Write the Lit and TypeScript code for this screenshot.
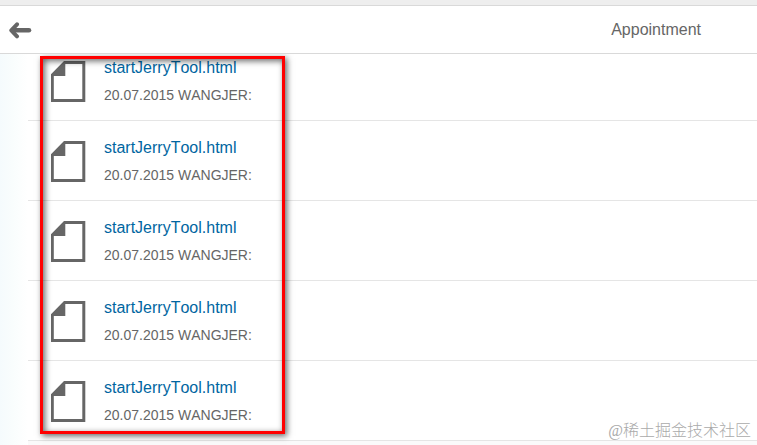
import { LitElement, html, css } from "lit";
import { customElement, property, state } from "lit/decorators.js";

interface Attachment {
  name: string;
  date: string;
  author: string;
}

@customElement("attachment-row")
class AttachmentRow extends LitElement {
  @property({ attribute: false }) item!: Attachment;

  static styles = css`
    :host {
      display: flex;
      box-sizing: border-box;
      height: 80px;
      padding: 17px 0 0 23px;
      gap: 18px;
      border-bottom: 1px solid #e5e5e5;
    }
    .icon {
      flex: none;
      width: 35px;
      height: 42px;
      margin-top: 3px;
      fill: #666;
    }
    .text {
      display: flex;
      flex-direction: column;
      align-items: flex-start;
      gap: 7px;
    }
    .name {
      font-size: 16px;
      line-height: 20px;
      color: #0066a1;
      text-decoration: none;
    }
    .meta {
      font-size: 14px;
      line-height: 20px;
      color: #666;
    }
  `;

  render() {
    return html`
      <svg class="icon" viewBox="0 0 35 42" aria-hidden="true">
        <path
          fill-rule="evenodd"
          d="M13 0H34.300V41H0V13.300ZM14.300 3V15H2.800V38H31.300V3Z"
        ></path>
      </svg>
      <div class="text">
        <a class="name" href="#">${this.item.name}</a>
        <span class="meta">${this.item.date} ${this.item.author}:</span>
      </div>
    `;
  }
}

@customElement("app-root")
class AppRoot extends LitElement {
  @state() private items: Attachment[] = Array.from({ length: 5 }, () => ({
    name: "startJerryTool.html",
    date: "20.07.2015",
    author: "WANGJER",
  }));

  static styles = css`
    :host {
      display: flex;
      flex-direction: column;
      position: relative;
      min-height: 100vh;
      font-family: "Liberation Sans", Arial, sans-serif;
      font-kerning: none;
      background: #fff;
    }
    .strip {
      height: 5px;
      background: #eee;
      border-bottom: 1px solid #d9d9d9;
    }
    header {
      display: flex;
      align-items: center;
      justify-content: space-between;
      height: 47px;
      padding: 0 56px 0 8px;
      border-bottom: 1px solid #d9d9d9;
    }
    .back {
      display: flex;
      padding: 0;
      border: 0;
      background: none;
      cursor: pointer;
    }
    .back svg {
      width: 24px;
      height: 19px;
      fill: none;
      stroke: #666;
      stroke-linecap: round;
      stroke-linejoin: round;
    }
    h1 {
      margin: 0;
      font-size: 16px;
      line-height: 20px;
      font-weight: 400;
      color: #666;
    }
    main {
      flex: 1;
      position: relative;
      overflow: hidden;
      padding-left: 28px;
      background: linear-gradient(to right, #f5fbfd 0, #f9fdfd 12px, #fff 28px);
    }
    /* The list is scrolled a little way under the header. */
    ul {
      margin: -13px 0 0;
      padding: 0;
      list-style: none;
    }
    .footer {
      height: 4px;
      background: #fafafa;
    }
    .highlight {
      position: absolute;
      top: 2px;
      left: 40px;
      box-sizing: border-box;
      width: 245px;
      height: 378px;
      border: 3px solid #f00;
      box-shadow:
        2px 2px 6px rgba(0, 0, 0, 0.6),
        inset 2px 2px 6px rgba(0, 0, 0, 0.6);
      pointer-events: none;
    }
    .watermark {
      position: absolute;
      right: 6px;
      bottom: 2px;
      font-family: "Liberation Serif", "Noto Sans CJK SC", serif;
      font-size: 16px;
      line-height: 24px;
      font-weight: 300;
      color: #aaa;
      text-shadow: 0 0 2px #fff;
    }
  `;

  render() {
    return html`
      <div class="strip"></div>
      <header>
        <button class="back" aria-label="Back">
          <svg viewBox="0 0 24 19" aria-hidden="true">
            <path d="M5 10.300H21" stroke-width="4.500"></path>
            <path d="M9 4.300L3.300 10.300L9 16.300" stroke-width="4"></path>
          </svg>
        </button>
        <h1>Appointment</h1>
      </header>
      <main>
        <ul>
          ${this.items.map(
            (item) => html`<li><attachment-row .item=${item}></attachment-row></li>`
          )}
        </ul>
        <div class="footer"></div>
        <div class="highlight"></div>
      </main>
      <div class="watermark">@稀土掘金技术社区</div>
    `;
  }
}
